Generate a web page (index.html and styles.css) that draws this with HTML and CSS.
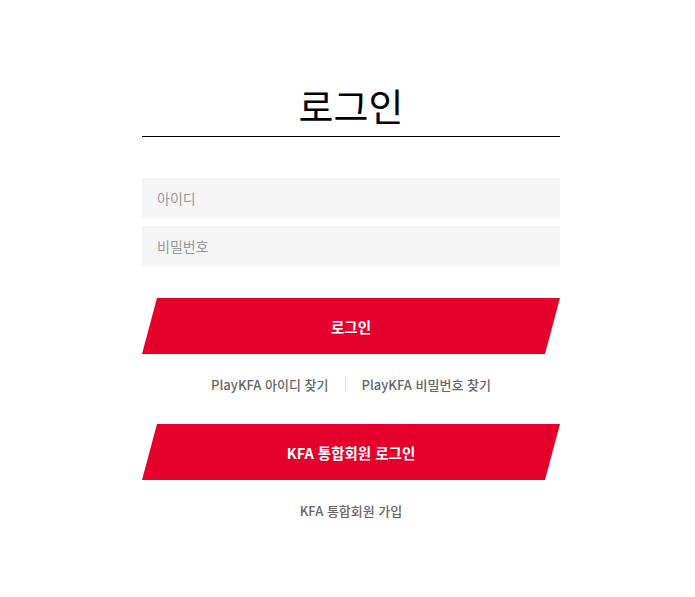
FILE: index.html
```html
<!DOCTYPE html>
<html lang="ko">
<head>
    <meta charset="UTF-8" />
    <meta name="viewport" content="width=device-width, initial-scale=1.0" />
    <title>로그인 - KFA</title>
    <link rel="stylesheet" href="styles.css">
</head>
<body>
    <div class="login-wrap">
        <h1 class="login-title">로그인</h1>

        <form class="login-form" onsubmit="return false;">
            <input type="text" class="login-input" placeholder="아이디" />
            <input type="password" class="login-input" placeholder="비밀번호" />
            <button type="submit" class="btn-slant">로그인</button>
        </form>

        <div class="find-links">
            <a href="#">PlayKFA 아이디 찾기</a>
            <span class="bar"></span>
            <a href="#">PlayKFA 비밀번호 찾기</a>
        </div>

        <button type="button" class="btn-slant btn-kfa">KFA 통합회원 로그인</button>

        <div class="join-link">
            <a href="#">KFA 통합회원 가입</a>
        </div>
    </div>
</body>
</html>
```

FILE: styles.css
```css
* {
    margin: 0;
    padding: 0;
    box-sizing: border-box;
}

body {
    font-family: "Noto Sans CJK KR", "Noto Sans", sans-serif;
    background-color: #fff;
    color: #000;
    padding-left: 7px;
}

.login-wrap {
    width: 418px;
    margin: 0 auto;
    padding-top: 76px;
}

.login-title {
    font-size: 38px;
    font-weight: 400;
    text-align: center;
    line-height: 58px;
    padding-bottom: 2px;
    border-bottom: 1px solid #000;
}

.login-form {
    margin-top: 41px;
    display: flex;
    flex-direction: column;
    gap: 8px;
}

.login-input {
    height: 40px;
    border: none;
    background-color: #f5f5f5;
    padding: 0 15px;
    font-family: inherit;
    font-size: 14px;
    color: #333;
    outline: none;
}

.login-input::placeholder {
    color: #999;
}

.btn-slant {
    display: block;
    width: 100%;
    height: 56px;
    border: none;
    background-color: #e4002b;
    color: #fff;
    font-family: inherit;
    font-size: 14.5px;
    font-weight: 700;
    cursor: pointer;
    clip-path: polygon(15px 0, 100% 0, calc(100% - 15px) 100%, 0 100%);
}

.login-form .btn-slant {
    margin-top: 24px;
}

.find-links {
    display: flex;
    justify-content: center;
    align-items: center;
    gap: 16px;
    margin-top: 20px;
    height: 20px;
}

.find-links a,
.join-link a {
    font-size: 13px;
    font-weight: 500;
    color: #666;
    text-decoration: none;
}

.find-links .bar {
    width: 1px;
    height: 14px;
    background-color: #ddd;
}

.btn-kfa {
    margin-top: 30px;
}

.join-link {
    text-align: center;
    margin-top: 18px;
    line-height: 22px;
}
```
